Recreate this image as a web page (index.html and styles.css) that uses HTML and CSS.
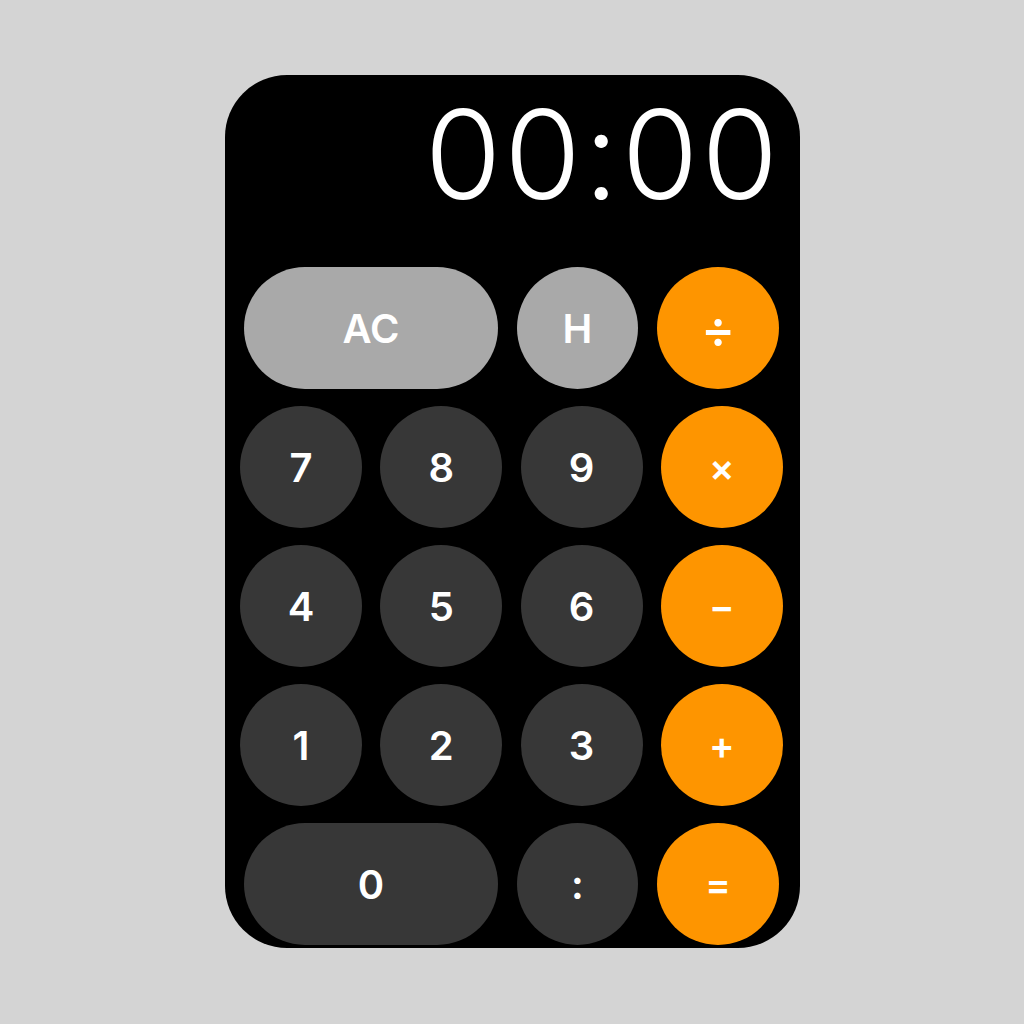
FILE: index.html
```html
<!DOCTYPE html>
<html>
<head>
<meta charset="utf-8">
<link rel="stylesheet" href="styles.css">
</head>
<body>
<div class="calc">
  <div class="display">00:00</div>
  <div class="keypad">
    <div class="row row-wide">
      <div class="key key-light key-pill">AC</div>
      <div class="key key-light">H</div>
      <div class="key key-op key-div">÷</div>
    </div>
    <div class="row">
      <div class="key key-dark">7</div>
      <div class="key key-dark">8</div>
      <div class="key key-dark">9</div>
      <div class="key key-op">×</div>
    </div>
    <div class="row">
      <div class="key key-dark">4</div>
      <div class="key key-dark">5</div>
      <div class="key key-dark">6</div>
      <div class="key key-op">−</div>
    </div>
    <div class="row">
      <div class="key key-dark">1</div>
      <div class="key key-dark">2</div>
      <div class="key key-dark">3</div>
      <div class="key key-op">+</div>
    </div>
    <div class="row row-wide">
      <div class="key key-dark key-pill">0</div>
      <div class="key key-dark">:</div>
      <div class="key key-op">=</div>
    </div>
  </div>
</div>
</body>
</html>
```

FILE: styles.css
```css
html, body {
  margin: 0;
  padding: 0;
  background: #d4d4d4;
}

body {
  width: 1024px;
  height: 1024px;
  font-family: "Inter", "Noto Sans", sans-serif;
}

.calc {
  box-sizing: border-box;
  width: 575px;
  height: 873px;
  margin: 75px 0 0 225px;
  background: #000;
  border-radius: 62px;
  overflow: hidden;
  display: flex;
  flex-direction: column;
}

.display {
  height: 192px;
  padding-right: 19px;
  color: #fff;
  font-size: 124px;
  font-weight: 300;
  line-height: 1;
  text-align: right;
  padding-top: 17px;
  box-sizing: border-box;
  letter-spacing: 3px;
}

.keypad {
  display: flex;
  flex-direction: column;
  gap: 17px;
}

.row {
  display: flex;
  gap: 18.3px;
  padding-left: 15px;
}

.row-wide {
  gap: 19px;
  padding-left: 19px;
}

.key {
  width: 122px;
  height: 122px;
  border-radius: 50%;
  display: flex;
  align-items: center;
  justify-content: center;
  color: #fff;
  font-size: 40px;
  font-weight: 600;
}

.row-wide .key:nth-child(2) {
  width: 121px;
}

.key-pill {
  width: 254px;
  border-radius: 61px;
}

.key-light {
  background: #a9a9a9;
}

.key-dark {
  background: #373737;
}

.key-op {
  background: #fe9500;
  font-weight: 600;
  font-size: 38px;
}

.key-div {
  font-size: 52px;
  font-weight: 500;
}
```
